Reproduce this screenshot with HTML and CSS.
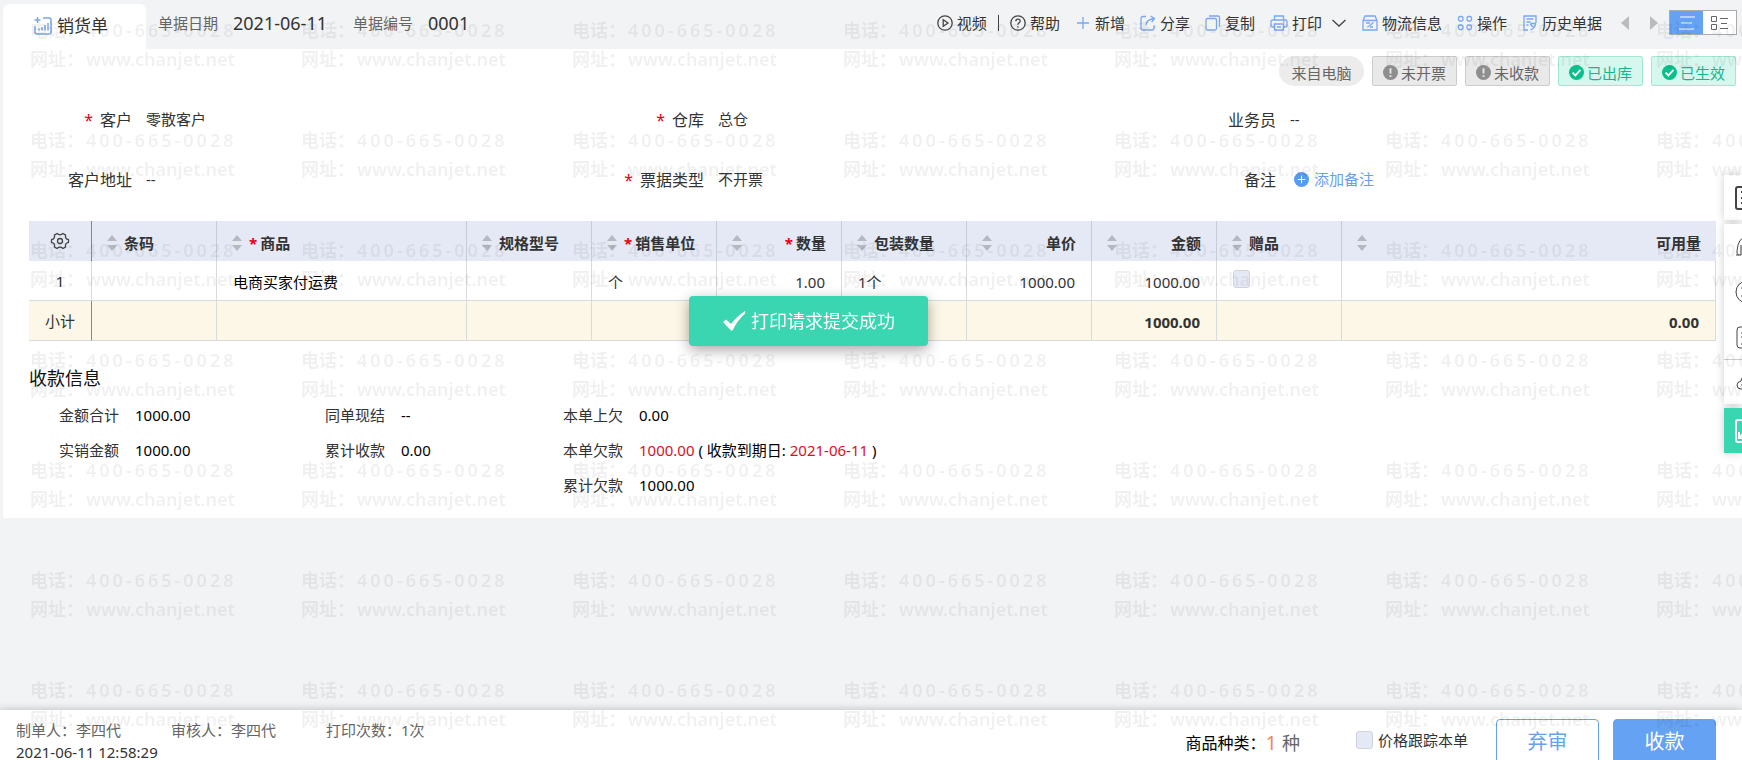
FILE: index.html
```html
<!DOCTYPE html>
<html lang="zh-CN">

<head>
    <meta charset="UTF-8">
    <meta name="viewport" content="width=device-width, initial-scale=1.0">
    <title>销货单</title>
    <link rel="stylesheet" href="styles.css">
</head>

<body>
    <header class="topbar">
        <div class="tab">
            <svg class="tab-icon" viewBox="0 0 20 20">
                <path d="M10 2h6q2 0 2 2v12q0 2-2 2H4q-2 0-2-2v-6M4.500 1v6M1.500 4h6M6 14.500v-2M9 14.500V11M12 14.500V9M15 14.500V7" />
            </svg>
            <span>销货单</span>
        </div>
        <div class="doc-info">
            <span>单据日期</span>
            <b>2021-06-11</b>
            <span class="doc-no">单据编号</span>
            <b>0001</b>
        </div>
        <nav class="toolbar">
            <button class="tool dark">
                <svg viewBox="0 0 16 16"><circle cx="8" cy="8" r="7.200" /><path d="M6.200 4.800v6.400L11 8z" /></svg>
                视频
            </button>
            <i class="bar"></i>
            <button class="tool dark">
                <svg viewBox="0 0 16 16"><circle cx="8" cy="8" r="7.200" /><path d="M5.800 6.300q0-2.200 2.200-2.200t2.200 2q0 1.100-1.200 1.800T8 9.800M8 11.200v1.300" /></svg>
                帮助
            </button>
            <button class="tool">
                <svg viewBox="0 0 16 16"><path d="M8 2v12M2 8h12" /></svg>
                新增
            </button>
            <button class="tool">
                <svg viewBox="0 0 16 16"><path d="M6 1.500H3q-2 0-2 2V13q0 2 2 2h9q2 0 2-2v-2.500M6 10.500q0-6 8-7M10.500 1l4 2.400-2.800 3.600" /></svg>
                分享
            </button>
            <button class="tool">
                <svg viewBox="0 0 16 16"><rect x="1" y="3.500" width="10.500" height="11.500" rx="1.500" /><path d="M4 1h9q1.500 0 1.500 1.500V12" /></svg>
                复制
            </button>
            <button class="tool">
                <svg class="wide" viewBox="0 0 18 16"><path d="M4.500 5V1h9v4M4.500 12H2.500Q1 12 1 10.500v-4Q1 5 2.500 5h13Q17 5 17 6.500v4q0 1.500-1.500 1.500h-2M4.500 9h9v6h-9zM7 12h4M13 7h1.500" /></svg>
                打印
            </button>
            <button class="tool chevron" aria-label="更多打印">
                <svg viewBox="0 0 16 16"><path d="M1.500 5l6.500 6 6.500-6" /></svg>
            </button>
            <button class="tool">
                <svg viewBox="0 0 16 16"><path d="M1 5.500L3 1h10l2 4.500V15H1zM1 5.500h14M4 8h4M5 12l1.500-.500 5-4M8 12h3" /></svg>
                物流信息
            </button>
            <button class="tool">
                <svg viewBox="0 0 16 16"><rect x="1.500" y="1.500" width="4.500" height="4.500" rx="1.500" /><rect x="10" y="1.500" width="4.500" height="4.500" rx="1.500" /><rect x="1.500" y="10" width="4.500" height="4.500" rx="1.500" /><rect x="10" y="10" width="4.500" height="4.500" rx="1.500" /></svg>
                操作
            </button>
            <button class="tool">
                <svg viewBox="0 0 16 16"><path d="M6 15H2V1h12v7M4.500 4h7M4.500 7h4M4.500 10h2M8.500 8.500h5q0 4-5 6.500M8.500 8.500q0 2.500 3 3" /></svg>
                历史单据
            </button>
            <button class="page-btn" aria-label="上一张"><i class="tri left"></i></button>
            <button class="page-btn" aria-label="下一张"><i class="tri right"></i></button>
            <div class="view-switch">
                <button class="active" aria-label="列表">
                    <svg viewBox="0 0 18 16"><path d="M2 2h15M3 8h11M1 14h15" /></svg>
                </button>
                <button aria-label="卡片">
                    <svg viewBox="0 0 18 16"><path d="M.500 1.500h5v5h-5zM.500 9.500h5v5h-5zM9 3.500h8M10 8.500h6M9 13.500h8" /></svg>
                </button>
            </div>
        </nav>
    </header>

    <main class="card">
        <div class="tags">
            <span class="tag pill">来自电脑</span>
            <span class="tag gray">
                <svg viewBox="0 0 16 16"><circle cx="8" cy="8" r="8" /><path d="M8 3.500v5.500M8 10.800v2" /></svg>未开票</span>
            <span class="tag gray">
                <svg viewBox="0 0 16 16"><circle cx="8" cy="8" r="8" /><path d="M8 3.500v5.500M8 10.800v2" /></svg>未收款</span>
            <span class="tag green">
                <svg viewBox="0 0 16 16"><circle cx="8" cy="8" r="8" /><path d="M3.800 8.200l3 3 5.400-6" /></svg>已出库</span>
            <span class="tag green">
                <svg viewBox="0 0 16 16"><circle cx="8" cy="8" r="8" /><path d="M3.800 8.200l3 3 5.400-6" /></svg>已生效</span>
        </div>

        <dl class="form">
            <div class="field"><dt><em>*</em>客户</dt><dd>零散客户</dd></div>
            <div class="field"><dt><em>*</em>仓库</dt><dd>总仓</dd></div>
            <div class="field"><dt>业务员</dt><dd>--</dd></div>
            <div class="field"><dt>客户地址</dt><dd>--</dd></div>
            <div class="field"><dt><em>*</em>票据类型</dt><dd>不开票</dd></div>
            <div class="field"><dt>备注</dt>
                <dd>
                    <a class="add-note" href="#">
                        <svg viewBox="0 0 16 16"><circle cx="8" cy="8" r="8" /><path d="M8 4v8M4 8h8" /></svg>
                        添加备注
                    </a>
                </dd>
            </div>
        </dl>

        <table class="goods">
            <colgroup>
                <col class="c-index">
                <col class="c-std">
                <col class="c-name">
                <col class="c-std" span="7">
                <col>
            </colgroup>
            <thead>
                <tr>
                    <th>
                        <svg class="gear" viewBox="0 0 20 20"><path d="M7 2.500q1.500 1.300 3 1.300t3-1.300l2.600 1.600q-.500 1.800.300 3t2.600 1.600v2.600q-1.800.400-2.600 1.600t-.300 3L13 17.500q-1.500-1.300-3-1.300t-3 1.300l-2.600-1.600q.500-1.800-.300-3t-2.600-1.600V8.700q1.800-.400 2.600-1.600t.300-3z" /><circle cx="10" cy="10" r="2.500" /></svg>
                    </th>
                    <th><div class="head"><i class="sort"></i><span>条码</span></div></th>
                    <th><div class="head"><i class="sort"></i><span><em>*</em>商品</span></div></th>
                    <th><div class="head"><i class="sort"></i><span>规格型号</span></div></th>
                    <th><div class="head"><i class="sort"></i><span><em>*</em>销售单位</span></div></th>
                    <th><div class="head num"><i class="sort"></i><span><em>*</em>数量</span></div></th>
                    <th><div class="head"><i class="sort"></i><span>包装数量</span></div></th>
                    <th><div class="head num"><i class="sort"></i><span>单价</span></div></th>
                    <th><div class="head num"><i class="sort"></i><span>金额</span></div></th>
                    <th><div class="head"><i class="sort"></i><span>赠品</span></div></th>
                    <th><div class="head num"><i class="sort"></i><span>可用量</span></div></th>
                </tr>
            </thead>
            <tbody>
                <tr>
                    <td>1</td>
                    <td></td>
                    <td class="name">电商买家付运费</td>
                    <td></td>
                    <td>个</td>
                    <td class="num">1.00</td>
                    <td>1个</td>
                    <td class="num">1000.00</td>
                    <td class="num">1000.00</td>
                    <td><input type="checkbox" class="check" aria-label="赠品"></td>
                    <td></td>
                </tr>
            </tbody>
            <tfoot>
                <tr>
                    <td>小计</td>
                    <td></td>
                    <td></td>
                    <td></td>
                    <td></td>
                    <td></td>
                    <td></td>
                    <td></td>
                    <td class="num">1000.00</td>
                    <td></td>
                    <td class="num">0.00</td>
                </tr>
            </tfoot>
        </table>

        <section class="pay">
            <h2>收款信息</h2>
            <div class="pay-cols">
                <dl>
                    <div><dt>金额合计</dt><dd>1000.00</dd></div>
                    <div><dt>实销金额</dt><dd>1000.00</dd></div>
                </dl>
                <dl>
                    <div><dt>同单现结</dt><dd>--</dd></div>
                    <div><dt>累计收款</dt><dd>0.00</dd></div>
                </dl>
                <dl>
                    <div><dt>本单上欠</dt><dd>0.00</dd></div>
                    <div><dt>本单欠款</dt><dd><em>1000.00</em> ( 收款到期日: <em>2021-06-11</em> )</dd></div>
                    <div><dt>累计欠款</dt><dd>1000.00</dd></div>
                </dl>
            </div>
        </section>
    </main>

    <footer class="footer">
        <div class="makers">
            <p><span>制单人：李四代</span><span>审核人：李四代</span><span>打印次数：1次</span></p>
            <p class="time">2021-06-11 12:58:29</p>
        </div>
        <div class="kinds">商品种类：<b>1</b><span>种</span></div>
        <label class="follow"><input type="checkbox" class="check"> 价格跟踪本单</label>
        <button class="btn">弃审</button>
        <button class="btn primary">收款</button>
    </footer>

    <aside class="side">
        <div class="side-box">
            <button aria-label="单据"><svg viewBox="0 0 26 26" class="thick"><rect x="2" y="2" width="22" height="22" rx="2" /><path d="M7 7h12M7 13h12M7 18h12" /></svg></button>
        </div>
        <div class="side-box">
            <button aria-label="客服"><svg viewBox="0 0 26 26"><path d="M5 21q-3-1-2-4 1-14 10-14t10 14q1 3-2 4M7 21V11M2 21h5" /></svg></button>
            <button aria-label="费用"><svg viewBox="0 0 26 26"><circle cx="13" cy="13" r="11" /><path d="M7 9h12M8 13h10M7 17h12M9 5l4 4" /></svg></button>
            <button aria-label="清单"><svg viewBox="0 0 26 26"><rect x="3" y="3" width="20" height="21" rx="3" /><path d="M7 9h12M7 13h12M8 17h8M7 20h8" /></svg></button>
            <button class="line" aria-label="云"><svg viewBox="0 0 26 26"><path d="M7 20q-4 0-4-4 0-3 4-4 1-6 6-6t6 6q4 1 4 4 0 4-4 4zM7 16h4" /></svg></button>
        </div>
        <div class="side-box on">
            <button aria-label="报表"><svg viewBox="0 0 26 26" class="thick"><rect x="2" y="2" width="22" height="22" rx="2" /><path d="M5 14v6h6M5 20l7-7" /></svg></button>
        </div>
    </aside>

    <div class="toast" role="status">
        <svg viewBox="0 0 24 20"><path d="M1 11l3-2.500 5 4.500Q15 5 23 0q.500 1 0 2.500Q15 10 10.500 19.500H9z" /></svg>
        打印请求提交成功
    </div>

    <div class="watermark" aria-hidden="true"></div>

    <script>
        // repeat the watermark over the whole window
        const watermark = document.querySelector(".watermark");
        const cols = Math.ceil(window.innerWidth / 271);
        const rows = Math.ceil(window.innerHeight / 110);

        for (let i = 0; i < cols * rows; i++) {
            const mark = document.createElement("div");
            mark.className = "mark";
            mark.innerHTML = '<p>电话：<span class="phone">400-665-0028</span></p><p>网址：<span>www.chanjet.net</span></p>';
            watermark.appendChild(mark);
        }
        watermark.style.setProperty("--cols", cols);
    </script>
</body>

</html>
```
FILE: styles.css
```css
* {
    box-sizing: border-box;
}

body {
    margin: 0;
    height: 100vh;
    display: flex;
    flex-direction: column;
    overflow: hidden;
    background: #f2f3f5;
    color: #333;
    font-family: "Noto Sans", "Noto Sans CJK SC", sans-serif;
    font-size: 15px;
    font-weight: 400;
    line-height: 20px;
}

button {
    margin: 0;
    padding: 0;
    border: 0;
    background: none;
    color: inherit;
    font: inherit;
    cursor: pointer;
}

svg {
    flex: none;
    fill: none;
    stroke: currentColor;
}

p, dl, dd, h2 {
    margin: 0;
}

em {
    color: #e60012;
    font-style: normal;
}

/* top bar */
.topbar {
    display: flex;
    align-items: center;
    height: 49px;
    padding: 0 5px 0 3px;
}

.tab {
    display: flex;
    align-items: center;
    align-self: flex-end;
    gap: 4px;
    width: 143px;
    height: 45px;
    padding: 0 0 2px 30px;
    border-radius: 6px 6px 0 0;
    background: #fff;
    font-size: 17px;
}

.tab-icon {
    width: 20px;
    height: 20px;
    color: #7ba6ea;
    stroke-width: 1.5;
}

.doc-info {
    display: flex;
    align-items: center;
    gap: 15px;
    margin-right: auto;
    padding: 0 0 3px 12px;
    color: #666;
}

.doc-info b {
    color: #333;
    font-size: 18px;
    font-weight: 400;
}

.doc-no {
    margin-left: 11px;
}

.toolbar {
    display: flex;
    align-items: center;
    gap: 15px;
    padding-bottom: 4px;
    white-space: nowrap;
}

.tool {
    display: flex;
    align-items: center;
    gap: 4px;
}

.tool svg {
    width: 16px;
    height: 16px;
    color: #7aa7ef;
    stroke-width: 1.3;
}

.tool svg.wide {
    width: 18px;
}

.tool.dark svg,
.tool.chevron svg {
    color: #444;
}

.tool.chevron {
    margin-left: -6px;
}

.bar {
    width: 1px;
    height: 16px;
    margin: 0 -4px;
    background: #444;
}

.page-btn {
    width: 12px;
}

.tri {
    display: block;
    border: 7px solid transparent;
}

.tri.left {
    border-left-width: 0;
    border-right: 8px solid #b9bbbd;
}

.tri.right {
    border-right-width: 0;
    border-left: 8px solid #b9bbbd;
}

.page-btn + .page-btn {
    margin: 0 -8px 0 6px;
}

.view-switch {
    display: flex;
    width: 68px;
    height: 25px;
    border: 1px solid #aaa;
    background: #fff;
    color: #666;
}

.view-switch button {
    display: flex;
    flex: 1;
    align-items: center;
    justify-content: center;
}

.view-switch svg {
    width: 18px;
    height: 16px;
}

.view-switch .active {
    background: #65a2f4;
    color: #fff;
}

/* card */
.card {
    margin-left: 3px;
    padding: 7px 26px 16px;
    background: #fff;
}

.tags {
    display: flex;
    justify-content: flex-end;
    gap: 8px;
    margin-right: -20px;
}

.tag {
    display: flex;
    align-items: center;
    justify-content: center;
    gap: 3px;
    width: 85px;
    height: 30px;
    padding-top: 3px;
    border: 1px solid #ccc;
    border-radius: 2px;
    background: #e9e9e9;
    color: #666;
}

.tag svg {
    width: 15px;
    height: 15px;
    stroke: #e9e9e9;
    stroke-width: 2;
}

.tag circle {
    fill: #8e8e8e;
    stroke: none;
}

.tag.pill {
    border: 0;
    border-radius: 15px;
    background: #ececec;
}

.tag.green {
    border-color: #a0e8d3;
    background: #d6f7ee;
    color: #16b58b;
}

.tag.green circle {
    fill: #09c08c;
}

.tag.green svg {
    stroke: #fff;
}

.form {
    display: grid;
    grid-template-columns: repeat(3, 1fr);
    margin: 4px -3px 0 -26px;
}

.field {
    display: flex;
    align-items: center;
    gap: 14px;
    height: 60px;
}

.field dt {
    width: 129px;
    font-size: 16px;
    text-align: right;
}

.field dd {
    padding-bottom: 2px;
}

.field em {
    margin-right: 7px;
}

.add-note {
    display: flex;
    align-items: center;
    gap: 5px;
    padding-left: 4px;
    color: #68a0ee;
    text-decoration: none;
}

.add-note svg {
    width: 15px;
    height: 15px;
    stroke: #fff;
}

.add-note circle {
    fill: #5b9bee;
    stroke: none;
}

/* goods table */
.goods {
    width: 100%;
    margin-top: 11px;
    border-collapse: separate;
    border-spacing: 0;
    table-layout: fixed;
}

.c-index {
    width: 63px;
}

.c-std {
    width: 125px;
}

.c-name {
    width: 250px;
}

.goods th,
.goods td {
    height: 40px;
    padding: 2px 16px 0;
    border-right: 1px solid #d9dadc;
    text-align: left;
}

.goods th {
    padding: 4px 15px 0;
    border-color: #c9ccd5;
    background: #e5e9f5;
    font-weight: bold;
}

.goods tbody td,
.goods tfoot td {
    border-bottom: 1px solid #d9dadc;
}

.goods td.name {
    color: #000;
}

.goods td.num {
    text-align: right;
}

.goods tr > :first-child {
    padding: 0;
    text-align: center;
}

.goods thead tr > :first-child,
.goods tfoot tr > :first-child {
    border-right-color: #888;
}

.goods thead tr > :last-child {
    border-right: 0;
}

.goods tfoot td {
    background: #fcf7e6;
    font-weight: bold;
}

.goods tfoot tr > :first-child {
    font-weight: 400;
}

.head {
    display: flex;
    align-items: center;
    gap: 7px;
}

.head.num {
    justify-content: space-between;
}

.head em {
    margin-right: 3px;
}

.sort {
    display: flex;
    flex-direction: column;
    gap: 4px;
}

.sort::before,
.sort::after {
    content: "";
    border: 5px solid transparent;
}

.sort::before {
    border-top: 0;
    border-bottom: 6px solid #b5b8bf;
}

.sort::after {
    border-bottom: 0;
    border-top: 6px solid #b5b8bf;
}

.gear {
    display: block;
    width: 20px;
    height: 20px;
    margin: 0 auto;
    color: #444;
    stroke-width: 1.3;
}

.check {
    appearance: none;
    display: block;
    width: 17px;
    height: 18px;
    margin: 0;
    border: 1px solid #cfd3dc;
    border-radius: 3px;
    background: #e5e9f5;
}

.goods .check {
    margin-bottom: 6px;
}

/* payment */
.pay {
    padding-top: 27px;
}

.pay h2 {
    color: #111;
    font-size: 18px;
    font-weight: 400;
}

.pay-cols {
    display: grid;
    grid-template-columns: 266px 238px 1fr;
    margin: 9px 0 0 30px;
}

.pay-cols div {
    display: flex;
    align-items: center;
    gap: 16px;
    height: 35px;
}

.pay-cols dd {
    color: #000;
}

.pay-cols em {
    color: #d9111d;
}

/* footer */
.footer {
    display: flex;
    align-items: flex-start;
    height: 50px;
    margin-top: auto;
    padding: 9px 26px 0 16px;
    background: #fff;
    box-shadow: 0 0 8px rgba(0, 0, 0, 0.25);
}

.makers {
    margin-right: auto;
    line-height: 22px;
}

.makers p {
    display: flex;
    gap: 50px;
    color: #666;
}

.makers .time {
    color: #333;
}

.kinds {
    display: flex;
    align-items: center;
    height: 48px;
    color: #000;
    font-size: 16px;
}

.kinds b {
    margin-right: 5px;
    color: #f08a5b;
    font-size: 20px;
    font-weight: 400;
}

.kinds span {
    color: #666;
    font-size: 18px;
}

.follow {
    display: flex;
    align-items: center;
    gap: 5px;
    height: 42px;
    margin: 0 28px 0 56px;
}

.btn {
    width: 103px;
    height: 46px;
    border: 1px solid #65a2f4;
    border-radius: 4px;
    color: #65a2f4;
    font-size: 20px;
}

.btn.primary {
    margin-left: 14px;
    background: #65a2f4;
    color: #fff;
}

/* side tools, half hidden behind the window edge */
.side {
    position: fixed;
    top: 175px;
    right: 0;
    display: flex;
    flex-direction: column;
    gap: 4px;
    width: 18px;
}

.side-box {
    overflow: hidden;
    background: #fff;
    box-shadow: 0 0 10px rgba(0, 0, 0, 0.2);
    color: #444;
}

.side-box button {
    display: flex;
    align-items: center;
    width: 46px;
    height: 45px;
    padding-left: 10px;
}

.side-box .line {
    border-top: 1px solid #ccc;
}

.side-box svg {
    width: 26px;
    height: 26px;
}

.side-box svg.thick {
    stroke-width: 2;
}

.side-box.on {
    background: #3ad6b2;
    color: #fff;
}

.toast {
    position: fixed;
    top: 296px;
    left: 689px;
    z-index: 10;
    display: flex;
    align-items: center;
    justify-content: center;
    gap: 5px;
    width: 239px;
    height: 50px;
    border-radius: 4px;
    background: #3ad6b2;
    box-shadow: 0 4px 14px rgba(0, 0, 0, 0.35);
    color: #fff;
    font-size: 18px;
}

.toast svg {
    width: 24px;
    height: 20px;
    fill: #fff;
    stroke: none;
}

.watermark {
    position: fixed;
    inset: 0;
    z-index: 5;
    display: grid;
    grid-template-columns: repeat(var(--cols), 271px);
    grid-auto-rows: 110px;
    align-content: start;
    overflow: hidden;
    color: rgba(0, 0, 0, 0.06);
    font-size: 18px;
    font-weight: 600;
    line-height: 29px;
    pointer-events: none;
}

.mark {
    padding: 16px 0 0 30px;
    white-space: nowrap;
}

.mark p {
    display: flex;
    gap: 2px;
}

.phone {
    letter-spacing: 3px;
}
```
